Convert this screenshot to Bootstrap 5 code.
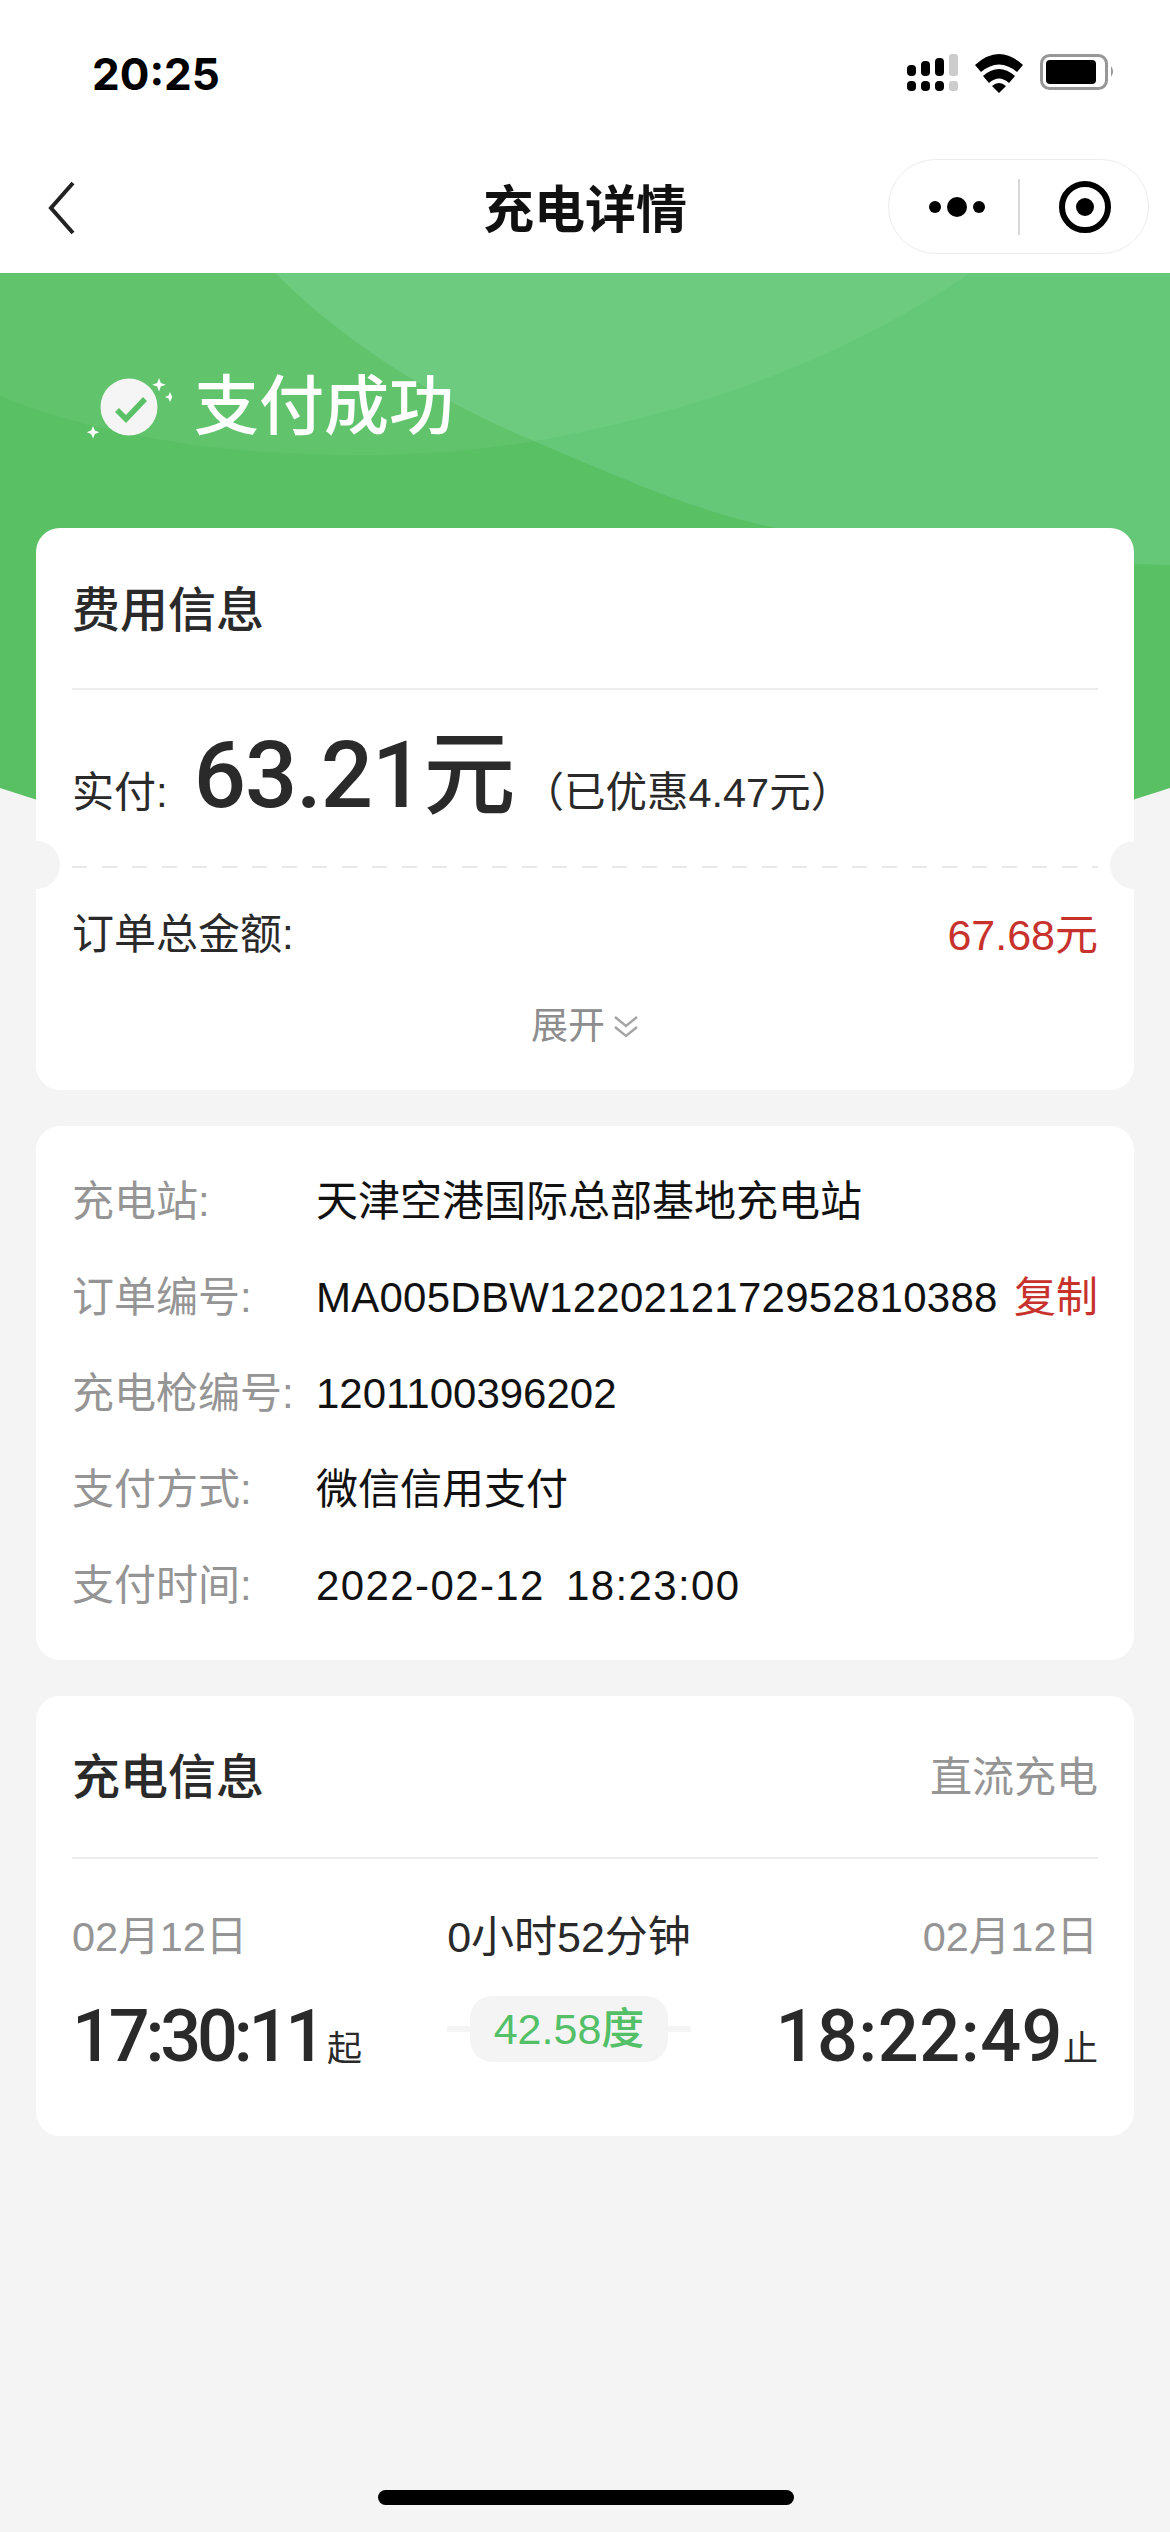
<!DOCTYPE html>
<html lang="en">
<head>
  <meta charset="UTF-8" />
  <title>充电详情</title>
  <meta name="viewport" content="width=device-width, initial-scale=1">
  <link href="https://cdn.jsdelivr.net/npm/bootstrap@5.3.0/dist/css/bootstrap.min.css" rel="stylesheet">
  <style>
    body {
      background: #f4f4f4;
      color: #2a2a2a;
      font-family: "Liberation Sans", "Noto Sans CJK SC", sans-serif;
      width: 1170px;
      height: 2532px;
      overflow: hidden;
      position: relative;
    }
    .top-area { background: #fff; height: 273px; }
    .status-row { height: 148px; padding: 0 55px 0 92px; }
    .clock { font-size: 44px; font-weight: 700; color: #000; font-family: Inter, "Liberation Sans", sans-serif; }
    .title-row { height: 125px; position: relative; }
    .back-btn { position: absolute; left: 46px; top: 32px; }
    .page-title { font-size: 51px; font-weight: 700; color: #111; line-height: 125px; padding-bottom: 10px; }
    .capsule {
      position: absolute; left: 888px; top: 11px; width: 261px; height: 95px;
      border: 1.5px solid #ececec; border-radius: 48px;
    }
    .capsule-dots { margin-left: 40px; }
    .capsule-line { width: 2px; height: 56px; background: #d8d8d8; margin-left: 33px; }
    .capsule-target { margin-left: 38px; }
    .hero { height: 620px; position: relative; padding: 96px 0 0 86px; }
    .hero-bg { position: absolute; left: 0; top: 0; }
    .hero-title { position: relative; gap: 22px; color: #fff; font-size: 65px; line-height: 76px; font-weight: 500; }
    .cards-wrap { margin: -365px 36px 0; gap: 36px; position: relative; }
    .panel { background: #fff; border-radius: 24px; padding: 0 36px; }
    .panel-head { font-size: 48px; font-weight: 500; line-height: 60px; color: #2a2a2a; }
    .fee-head { height: 162px; border-bottom: 2px solid #ededed; padding-top: 53px; }
    .pay-row { height: 176px; padding-top: 36px; }
    .pay-label { font-size: 42px; line-height: 50px; }
    .pay-num { font-family: Roboto, "Noto Sans CJK SC", sans-serif; font-size: 92px; font-weight: 500; margin-left: 26px; line-height: 100px; letter-spacing: -1px; }
    .pay-save { font-size: 41.5px; margin-left: 8px; line-height: 50px; }
    .ticket-cut {
      height: 2px; position: relative;
      background: repeating-linear-gradient(90deg, #e8e8e8 0 15px, transparent 15px 30px);
    }
    .ticket-cut::before, .ticket-cut::after {
      content: ""; position: absolute; top: -25px; width: 48px; height: 48px; border-radius: 50%; background: #f4f4f4;
    }
    .ticket-cut::before { left: -60px; }
    .ticket-cut::after { right: -60px; }
    .total-row { font-size: 42px; line-height: 50px; padding-top: 42px; }
    .total-val { color: #c8322d; font-size: 43px; }
    .expand-row { color: #8d8d8d; font-size: 37px; line-height: 46px; padding-top: 44px; padding-bottom: 40px; gap: 8px; }
    .info-panel { padding-top: 27px; padding-bottom: 27px; }
    .info-row { font-size: 42px; height: 96px; white-space: nowrap; color: #111; }
    .info-key { width: 244px; color: #959595; flex: none; }
    .order-no { letter-spacing: .25px; }
    .pay-time { letter-spacing: 1.4px; word-spacing: 8px; }
    .copy-link { color: #c8322d; margin-left: auto; }
    .charge-head { height: 163px; border-bottom: 2px solid #ededed; padding-top: 52px; }
    .charge-type { color: #959595; font-size: 42px; font-weight: 400; }
    .charge-body { height: 277px; padding-top: 51px; }
    .side-col { width: 375px; flex: none; }
    .date-txt { color: #959595; font-size: 41.5px; line-height: 54px; }
    .time-txt { font-family: Roboto, "Noto Sans CJK SC", sans-serif; font-size: 72px; font-weight: 500; line-height: 90px; letter-spacing: .5px; margin-top: 28px; white-space: nowrap; }
    .time-start { letter-spacing: -4.2px; }
    .time-tag { font-family: "Liberation Sans", "Noto Sans CJK SC", sans-serif; font-size: 35px; font-weight: 400; letter-spacing: 0; }
    .time-start .time-tag { margin-left: 5px; }
    .mid-col { width: 244px; flex: none; }
    .dur-txt { font-size: 43px; line-height: 54px; white-space: nowrap; }
    .kwh-wrap { position: relative; height: 66px; margin-top: 32px; }
    .kwh-wrap::before { content: ""; position: absolute; left: 0; right: 0; top: 30px; height: 6px; background: #f4f4f4; }
    .kwh-pill { position: relative; background: #f4f4f4; color: #53bf67; border-radius: 22px; width: 198px; height: 66px; font-size: 43px; font-weight: 500; line-height: 66px; }
    .home-bar { position: absolute; left: 378px; top: 2490px; width: 416px; height: 15px; border-radius: 8px; background: #000; }
  </style>
</head>
<body>

  <!-- status + nav -->
  <div class="top-area">
    <div class="status-row d-flex align-items-center justify-content-between">
      <span class="clock">20:25</span>
      <svg width="208" height="40" viewBox="0 0 208 40">
        <g fill="#000">
          <rect x="0" y="11" width="9" height="11" rx="4"/><rect x="14" y="7" width="9" height="15" rx="4"/><rect x="28" y="4" width="9" height="18" rx="4"/>
          <rect x="0" y="27" width="9" height="10" rx="4"/><rect x="14" y="27" width="9" height="10" rx="4"/><rect x="28" y="27" width="9" height="10" rx="4"/>
        </g>
        <rect x="42" y="0" width="9" height="22" rx="3" fill="#ccc"/><rect x="42" y="27" width="9" height="10" rx="3" fill="#ccc"/>
        <path d="M68 11Q92 -11 116 11L110 18Q92 3 74 18Z M76 22Q92 8 108 22L102 29Q92 20 82 29Z M85 32Q92 26 99 32L92 39Z" fill="#000"/>
        <rect x="134.500" y="1.500" width="65" height="33" rx="8" fill="none" stroke="#979797" stroke-width="3"/>
        <rect x="139" y="6" width="50" height="24" rx="4" fill="#000"/>
        <path d="M204 12q4 5.500 0 11Z" fill="#979797"/>
      </svg>
    </div>
    <div class="title-row text-center">
      <svg class="back-btn" width="30" height="56" viewBox="0 0 30 56"><path d="M27 3L5 28L27 53" fill="none" stroke="#222" stroke-width="4"/></svg>
      <div class="page-title">充电详情</div>
      <div class="capsule d-flex align-items-center">
        <svg class="capsule-dots" width="56" height="20" viewBox="0 0 56 20"><circle cx="6" cy="10" r="6"/><circle cx="28" cy="10" r="10"/><circle cx="50" cy="10" r="6"/></svg>
        <span class="capsule-line"></span>
        <svg class="capsule-target" width="54" height="54" viewBox="0 0 54 54"><circle cx="27" cy="27" r="23" fill="none" stroke="#000" stroke-width="6"/><circle cx="27" cy="27" r="9"/></svg>
      </div>
    </div>
  </div>

  <!-- green header -->
  <div class="hero">
    <svg class="hero-bg" width="1170" height="620" viewBox="0 0 1170 620">
      <defs>
        <clipPath id="heroClip"><path d="M0 515Q585 708 1170 515V0H0Z"/></clipPath>
      </defs>
      <g clip-path="url(#heroClip)">
        <rect width="1170" height="620" fill="#59c064"/>
        <path d="M0 123C150 185 380 195 534 168C720 135 860 75 970 0H0Z" fill="#fff" fill-opacity=".05"/>
        <path d="M275 0C340 65 430 125 534 168C620 205 700 240 776 255C900 275 1040 290 1170 292V0Z" fill="#b0f5e9" fill-opacity=".15"/>
      </g>
    </svg>
    <div class="hero-title d-flex align-items-center">
      <svg width="86" height="72" viewBox="0 0 86 72">
        <circle cx="43" cy="36" r="28.500" fill="#f5f5f5"/>
        <path d="M31 39L40 48L59 28" fill="none" stroke="#5bc166" stroke-width="5.500"/>
        <path d="M73 7l1.800 5 5 1.800 -5 1.800 -1.800 5 -1.800 -5 -5 -1.800 5 -1.800Z M84 21l1.500 3.500 3.500 1.500 -3.500 1.500 -1.500 3.500 -1.500 -3.500 -3.500 -1.500 3.500 -1.500Z M7 55l1.800 4.500 4.500 1.800 -4.500 1.800 -1.800 4.500 -1.800 -4.500 -4.500 -1.800 4.500 -1.800Z" fill="#fff"/>
      </svg>
      <span>支付成功</span>
    </div>
  </div>

  <div class="cards-wrap d-flex flex-column">
    <!-- fee card -->
    <div class="panel">
      <div class="panel-head fee-head">费用信息</div>
      <div class="pay-row d-flex align-items-baseline">
        <span class="pay-label">实付:</span>
        <span class="pay-num">63.21元</span>
        <span class="pay-save">（已优惠4.47元）</span>
      </div>
      <div class="ticket-cut"></div>
      <div class="total-row d-flex justify-content-between">
        <span>订单总金额:</span>
        <span class="total-val">67.68元</span>
      </div>
      <div class="expand-row d-flex justify-content-center align-items-center">
        <span>展开</span>
        <svg width="26" height="24" viewBox="0 0 26 24"><path d="M2 2L13 11L24 2M2 12L13 21L24 12" fill="none" stroke="#a5a5a5" stroke-width="2.500"/></svg>
      </div>
    </div>

    <!-- order card -->
    <div class="panel info-panel">
      <div class="info-row d-flex align-items-center"><span class="info-key">充电站:</span><span>天津空港国际总部基地充电站</span></div>
      <div class="info-row d-flex align-items-center"><span class="info-key">订单编号:</span><span class="order-no">MA005DBW1220212172952810388</span><span class="copy-link">复制</span></div>
      <div class="info-row d-flex align-items-center"><span class="info-key">充电枪编号:</span><span>1201100396202</span></div>
      <div class="info-row d-flex align-items-center"><span class="info-key">支付方式:</span><span>微信信用支付</span></div>
      <div class="info-row d-flex align-items-center"><span class="info-key">支付时间:</span><span class="pay-time">2022-02-12 18:23:00</span></div>
    </div>

    <!-- charge card -->
    <div class="panel">
      <div class="panel-head charge-head d-flex justify-content-between">
        <span>充电信息</span>
        <span class="charge-type">直流充电</span>
      </div>
      <div class="charge-body d-flex">
        <div class="side-col">
          <div class="date-txt">02月12日</div>
          <div class="time-txt time-start">17:30:11<span class="time-tag">起</span></div>
        </div>
        <div class="mid-col text-center">
          <div class="dur-txt">0小时52分钟</div>
          <div class="kwh-wrap d-flex justify-content-center">
            <div class="kwh-pill">42.58度</div>
          </div>
        </div>
        <div class="flex-grow-1 text-end">
          <div class="date-txt">02月12日</div>
          <div class="time-txt">18:22:49<span class="time-tag">止</span></div>
        </div>
      </div>
    </div>
  </div>

  <div class="home-bar"></div>

  <script src="https://cdn.jsdelivr.net/npm/bootstrap@5.3.0/dist/js/bootstrap.bundle.min.js"></script>
</body>
</html>
